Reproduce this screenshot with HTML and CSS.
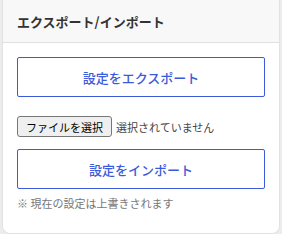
FILE: index.html
```html
<!DOCTYPE html>
<html lang="ja">
<head>
  <meta charset="utf-8">
  <title>エクスポート/インポート</title>
  <link rel="stylesheet" href="styles.css">
</head>
<body>
  <div class="card">
    <div class="card-header">エクスポート/インポート</div>
    <div class="card-body">
      <button class="outline-btn">設定をエクスポート</button>

      <div class="file-row">
        <label class="file-btn">
          <input type="file" class="file-input">ファイルを選択
        </label>
        <span class="file-name">選択されていません</span>
      </div>

      <button class="outline-btn">設定をインポート</button>
      <p class="note">※ 現在の設定は上書きされます</p>
    </div>
  </div>
</body>
</html>
```

FILE: styles.css
```css
body {
  margin: 0;
  padding: 0 2px;
  background: #ececec;
  font-family: "Noto Sans CJK JP", "Noto Sans", sans-serif;
  color: #333;
}

.card {
  background: #fff;
  border: 1px solid #e2e2e2;
  border-top: none;
  border-radius: 0 0 8px 8px;
  overflow: hidden;
}

.card-header {
  height: 42px;
  display: flex;
  align-items: center;
  padding: 0 14px;
  background: #f8f8f8;
  border-bottom: 1px solid #e0e0e0;
  font-size: 13px;
  font-weight: 700;
  color: #333;
}

.card-body {
  display: flex;
  flex-direction: column;
  padding: 14px 14px 22px;
}

.outline-btn {
  height: 40px;
  width: 100%;
  background: #fff;
  border: 1px solid #3b5bdb;
  border-radius: 2px;
  color: #3b5bdb;
  font-family: inherit;
  font-size: 13px;
  font-weight: 500;
  cursor: pointer;
}

.outline-btn:hover {
  background: #f0f3ff;
}

.file-row {
  display: flex;
  align-items: center;
  gap: 4px;
  margin: 19px 0 12px;
}

.file-btn {
  display: inline-flex;
  align-items: center;
  height: 19px;
  padding: 0 8px;
  background: #efefef;
  border: 1px solid #767676;
  border-radius: 3px;
  font-size: 11px;
  color: #000;
  cursor: pointer;
}

.file-input {
  display: none;
}

.file-name {
  font-size: 11px;
  color: #444;
}

.note {
  margin: 6px 0 0;
  font-size: 11px;
  line-height: 16px;
  color: #777;
}
```
